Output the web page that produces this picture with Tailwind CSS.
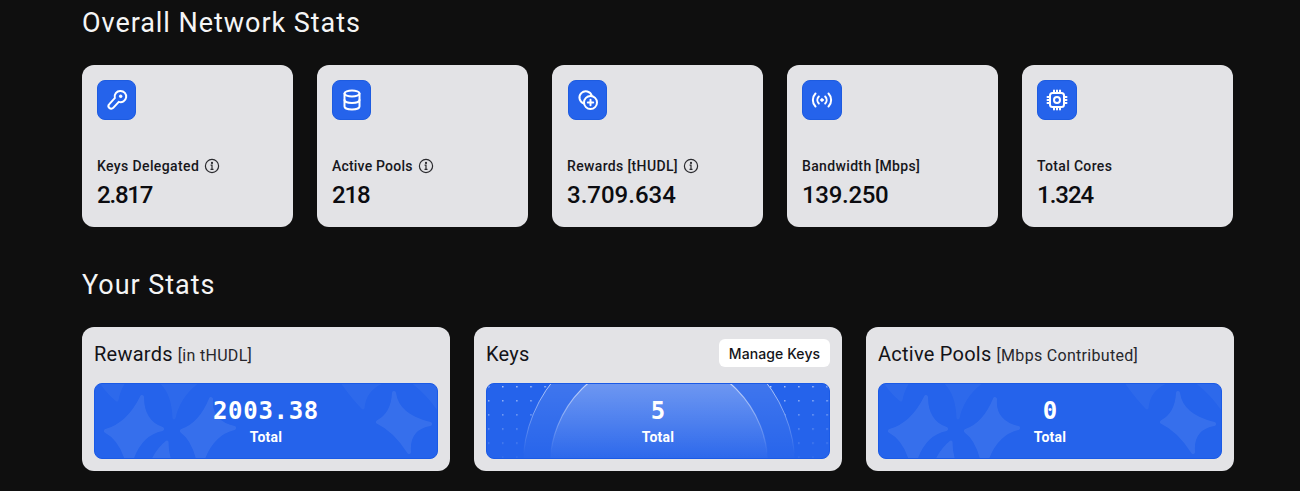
<!DOCTYPE html>
<html lang="en">
<head>
<meta charset="utf-8">
<title>Network Stats</title>
<script src="https://cdn.jsdelivr.net/npm/@tailwindcss/browser@4"></script>
</head>
<body class="bg-[#0f0f0f] h-[491px] overflow-hidden font-['Roboto',sans-serif]">
<svg width="0" height="0" class="absolute">
  <defs>
    <linearGradient id="innerFill" gradientUnits="userSpaceOnUse" x1="0" y1="0" x2="0" y2="76"><stop offset="0" stop-color="#fff" stop-opacity=".24"/><stop offset="1" stop-color="#fff" stop-opacity=".02"/></linearGradient>
    <linearGradient id="outerFill" gradientUnits="userSpaceOnUse" x1="0" y1="0" x2="0" y2="76"><stop offset="0" stop-color="#fff" stop-opacity=".12"/><stop offset="1" stop-color="#fff" stop-opacity=".01"/></linearGradient>
    <linearGradient id="arcStroke" gradientUnits="userSpaceOnUse" x1="0" y1="0" x2="0" y2="70"><stop offset="0" stop-color="#fff" stop-opacity=".65"/><stop offset="1" stop-color="#fff" stop-opacity="0"/></linearGradient>
    <linearGradient id="dotFade" x1="0" y1="0" x2="0" y2="1"><stop offset="0" stop-color="#fff" stop-opacity="1"/><stop offset="1" stop-color="#fff" stop-opacity=".1"/></linearGradient>
    <pattern id="dots" x="1" y="2" width="14.1" height="14.1" patternUnits="userSpaceOnUse"><rect x="0" y="0" width="1.4" height="1.4" fill="#fff" fill-opacity=".7"/></pattern>
    <mask id="dotMask"><rect width="344" height="76" fill="url(#dotFade)"/></mask>
    <g id="stars" fill="#fff" stroke="#fff" stroke-linejoin="round">
      <g stroke-width="4" opacity=".08">
        <path d="M47 13Q47 38 67 45Q42 50 34 84Q28 56 11 47Q34 40 47 13Z"/>
        <path d="M116 15Q114 38 139 44Q114 50 105 84Q100 56 87 47Q106 40 116 15Z"/>
        <path d="M299 9Q302 32 335 40Q312 44 314 68Q300 46 283 38Q298 30 299 9Z"/>
      </g>
      <g stroke-width="3" opacity=".04">
        <path d="M244 -6L300 -6Q270 0 268 24Q258 14 244 -6Z"/>
        <path d="M312 -6L344 -6L344 26Q330 6 312 -6Z"/>
        <path d="M60 -6Q78 4 79 34Q84 10 108 -6Z"/>
        <path d="M3 -6L32 -6Q24 4 22 16Q12 8 3 -6Z"/>
      </g>
      <path stroke-width="3" opacity=".08" d="M72 58Q62 66 56 80L76 80Q72 70 72 58Z"/>
    </g>
  </defs>
</svg>

<main class="w-[1234px] pl-[82px]">
  <h2 class="text-[27px] leading-[34px] pt-[6px] font-[450] text-[#f5f5f5] tracking-[0.95px]">Overall Network Stats</h2>

  <section class="grid grid-cols-5 gap-6 mt-[25px] w-[1151px]">
    <article class="h-[162px] rounded-xl bg-[#e3e3e6] p-[15px] flex flex-col">
      <div class="w-[39px] h-10 rounded-lg bg-[#2563eb] border border-[#1d5be0] flex items-center justify-center text-white">
        <svg width="24" height="24" viewBox="0 0 24 24" fill="none" stroke="currentColor" stroke-width="2"><path d="M15.5 3a5.6 5.6 0 1 1-1.7 10.9l-5.6 6a2.7 2.7 0 0 1-3.9-3.8l5.5-6A5.600 5.600 0 0 1 15.500 3Z"/><circle cx="15.700" cy="8.300" r="1.300" fill="currentColor" stroke-width="1"/></svg>
      </div>
      <div class="mt-auto flex items-center gap-[5px] text-[14px] leading-5 font-medium text-[#17171c] tracking-[0.38px]">Keys Delegated
        <svg width="16" height="16" viewBox="0 0 16 16" fill="none" stroke="#2a2a2e" stroke-width="1.2"><circle cx="8" cy="8" r="6.6"/><path d="M6.6 7.2H8V11.4M6.5 11.4H9.5" /><circle cx="8" cy="4.900" r=".5" fill="#2a2a2e"/></svg>
      </div>
      <div class="text-[24px] leading-8 font-medium text-[#0c0c10] mt-[3px] mb-[1px] tracking-[-1.2px]">2.817</div>
    </article>

    <article class="h-[162px] rounded-xl bg-[#e3e3e6] p-[15px] flex flex-col">
      <div class="w-[39px] h-10 rounded-lg bg-[#2563eb] border border-[#1d5be0] flex items-center justify-center text-white">
        <svg width="24" height="24" viewBox="0 0 24 24" fill="none" stroke="currentColor" stroke-width="2" stroke-linecap="round"><ellipse cx="12" cy="5.500" rx="7.500" ry="3"/><path d="M4.500 5.500v13c0 1.700 3.400 3 7.500 3s7.500-1.300 7.500-3v-13"/><path d="M4.500 12c0 1.700 3.400 3 7.500 3s7.500-1.300 7.500-3"/></svg>
      </div>
      <div class="mt-auto flex items-center gap-[5px] text-[14px] leading-5 font-medium text-[#17171c] tracking-[0.2px]">Active Pools
        <svg width="16" height="16" viewBox="0 0 16 16" fill="none" stroke="#2a2a2e" stroke-width="1.2"><circle cx="8" cy="8" r="6.6"/><path d="M6.6 7.2H8V11.4M6.5 11.4H9.5" /><circle cx="8" cy="4.900" r=".5" fill="#2a2a2e"/></svg>
      </div>
      <div class="text-[24px] leading-8 font-medium text-[#0c0c10] mt-[3px] mb-[1px] tracking-[-1.2px]">218</div>
    </article>

    <article class="h-[162px] rounded-xl bg-[#e3e3e6] p-[15px] flex flex-col">
      <div class="w-[39px] h-10 ml-[1px] rounded-lg bg-[#2563eb] border border-[#1d5be0] flex items-center justify-center text-white">
        <svg width="24" height="24" viewBox="0 0 24 24" fill="none" stroke="currentColor" stroke-width="2" stroke-linecap="round"><path d="M8 15.600A6.300 6.300 0 1 1 15.800 7.800"/><circle cx="14.500" cy="14.500" r="6.500"/><path d="M14.500 11.800v5.400M11.800 14.500h5.400"/></svg>
      </div>
      <div class="mt-auto flex items-center gap-[5px] text-[14px] leading-5 font-medium text-[#17171c] tracking-[0.35px]">Rewards [tHUDL]
        <svg width="16" height="16" viewBox="0 0 16 16" fill="none" stroke="#2a2a2e" stroke-width="1.2"><circle cx="8" cy="8" r="6.6"/><path d="M6.6 7.2H8V11.4M6.5 11.4H9.5" /><circle cx="8" cy="4.900" r=".5" fill="#2a2a2e"/></svg>
      </div>
      <div class="text-[24px] leading-8 font-medium text-[#0c0c10] mt-[3px] mb-[1px]">3.709.634</div>
    </article>

    <article class="h-[162px] rounded-xl bg-[#e3e3e6] p-[15px] flex flex-col">
      <div class="w-10 h-10 rounded-lg bg-[#2563eb] border border-[#1d5be0] flex items-center justify-center text-white">
        <svg width="24" height="24" viewBox="0 0 24 24" fill="none" stroke="currentColor" stroke-width="2" stroke-linecap="round"><path d="M5.500 5.500a9.300 9.300 0 0 0 0 13"/><path d="M8.800 8.500a5 5 0 0 0 0 7"/><path d="M15.200 8.500a5 5 0 0 1 0 7"/><path d="M18.500 5.500a9.300 9.300 0 0 1 0 13"/><circle cx="12" cy="12" r="1.300" fill="currentColor" stroke-width="1"/></svg>
      </div>
      <div class="mt-auto flex items-center gap-[5px] text-[14px] leading-5 font-medium text-[#17171c] tracking-[0.35px]">Bandwidth [Mbps]</div>
      <div class="text-[24px] leading-8 font-medium text-[#0c0c10] mt-[3px] mb-[1px] tracking-[-0.3px]">139.250</div>
    </article>

    <article class="h-[162px] rounded-xl bg-[#e3e3e6] p-[15px] flex flex-col">
      <div class="w-10 h-10 rounded-lg bg-[#2563eb] border border-[#1d5be0] flex items-center justify-center text-white">
        <svg width="24" height="24" viewBox="0 0 24 24" fill="none" stroke="currentColor" stroke-width="2" stroke-linecap="round"><rect x="5" y="5" width="14" height="14" rx="2.500"/><circle cx="12" cy="12" r="3"/><path d="M9 2.500V4.500M12 2.500V4.500M15 2.500V4.500M9 19.500V21.500M12 19.500V21.500M15 19.500V21.500M2.500 9H4.500M2.500 12H4.500M2.500 15H4.500M19.500 9H21.500M19.500 12H21.500M19.500 15H21.500"/></svg>
      </div>
      <div class="mt-auto flex items-center gap-[5px] text-[14px] leading-5 font-medium text-[#17171c] tracking-[0.35px]">Total Cores</div>
      <div class="text-[24px] leading-8 font-medium text-[#0c0c10] mt-[3px] mb-[1px] tracking-[-1px]">1.324</div>
    </article>
  </section>

  <h2 class="text-[27px] leading-[34px] mt-[41px] font-[450] text-[#f5f5f5] tracking-[0.95px]">Your Stats</h2>

  <section class="grid grid-cols-3 gap-6 mt-[25px] w-[1152px]">
    <article class="h-[144px] rounded-xl bg-[#e3e3e6] px-3 pt-3 pb-3 flex flex-col">
      <div class="h-7 flex items-baseline leading-[30px] text-[20px] text-[#131318] tracking-[0.25px]">Rewards<span class="text-[16px] ml-[5px] text-[#27272c] tracking-[0.3px]">[in tHUDL]</span></div>
      <div class="relative mt-auto h-[76px] rounded-lg overflow-hidden bg-[#2563eb] border border-[#1a5ae6] text-white flex flex-col items-center">
        <svg class="absolute inset-0" width="344" height="76" viewBox="0 0 344 76"><use href="#stars"/></svg>
        <div class="relative font-['DejaVu_Sans_Mono',monospace] font-bold text-[24px] leading-[30px] mt-[12px] tracking-[0.7px]">2003.38</div>
        <div class="relative text-[14px] leading-5 font-bold mt-[1px] tracking-[0.2px]">Total</div>
      </div>
    </article>

    <article class="h-[144px] rounded-xl bg-[#e3e3e6] px-3 pt-3 pb-3 flex flex-col">
      <div class="h-7 flex items-center justify-between text-[20px] text-[#131318] tracking-[0.25px]"><span class="pt-[1px]">Keys</span>
        <button class="h-7 w-[111px] rounded-md bg-white text-[14px] font-medium text-[#141418] font-['Inter',sans-serif] tracking-[0.1px]">Manage Keys</button>
      </div>
      <div class="relative mt-auto h-[76px] rounded-lg overflow-hidden bg-[#2563eb] border border-[#1a5ae6] text-white flex flex-col items-center">
        <svg class="absolute inset-0" width="344" height="76" viewBox="0 0 344 76">
          <rect width="344" height="76" fill="url(#dots)" mask="url(#dotMask)"/>
          <circle cx="172" cy="82" r="136" fill="#2563eb"/>
          <circle cx="172" cy="82" r="136" fill="url(#outerFill)" stroke="url(#arcStroke)"/>
          <circle cx="172" cy="82" r="109" fill="url(#innerFill)" stroke="url(#arcStroke)" stroke-width="1.200"/>
        </svg>
        <div class="relative font-['DejaVu_Sans_Mono',monospace] font-bold text-[24px] leading-[30px] mt-[12px]">5</div>
        <div class="relative text-[14px] leading-5 font-bold mt-[1px] tracking-[0.2px]">Total</div>
      </div>
    </article>

    <article class="h-[144px] rounded-xl bg-[#e3e3e6] px-3 pt-3 pb-3 flex flex-col">
      <div class="h-7 flex items-baseline leading-[30px] text-[20px] text-[#131318] tracking-[0.25px]">Active Pools<span class="text-[16px] ml-[5px] text-[#27272c] tracking-[0.3px]">[Mbps Contributed]</span></div>
      <div class="relative mt-auto h-[76px] rounded-lg overflow-hidden bg-[#2563eb] border border-[#1a5ae6] text-white flex flex-col items-center">
        <svg class="absolute inset-0" width="344" height="76" viewBox="0 0 344 76"><use href="#stars"/></svg>
        <div class="relative font-['DejaVu_Sans_Mono',monospace] font-bold text-[24px] leading-[30px] mt-[12px]">0</div>
        <div class="relative text-[14px] leading-5 font-bold mt-[1px] tracking-[0.2px]">Total</div>
      </div>
    </article>
  </section>
</main>
</body>
</html>
